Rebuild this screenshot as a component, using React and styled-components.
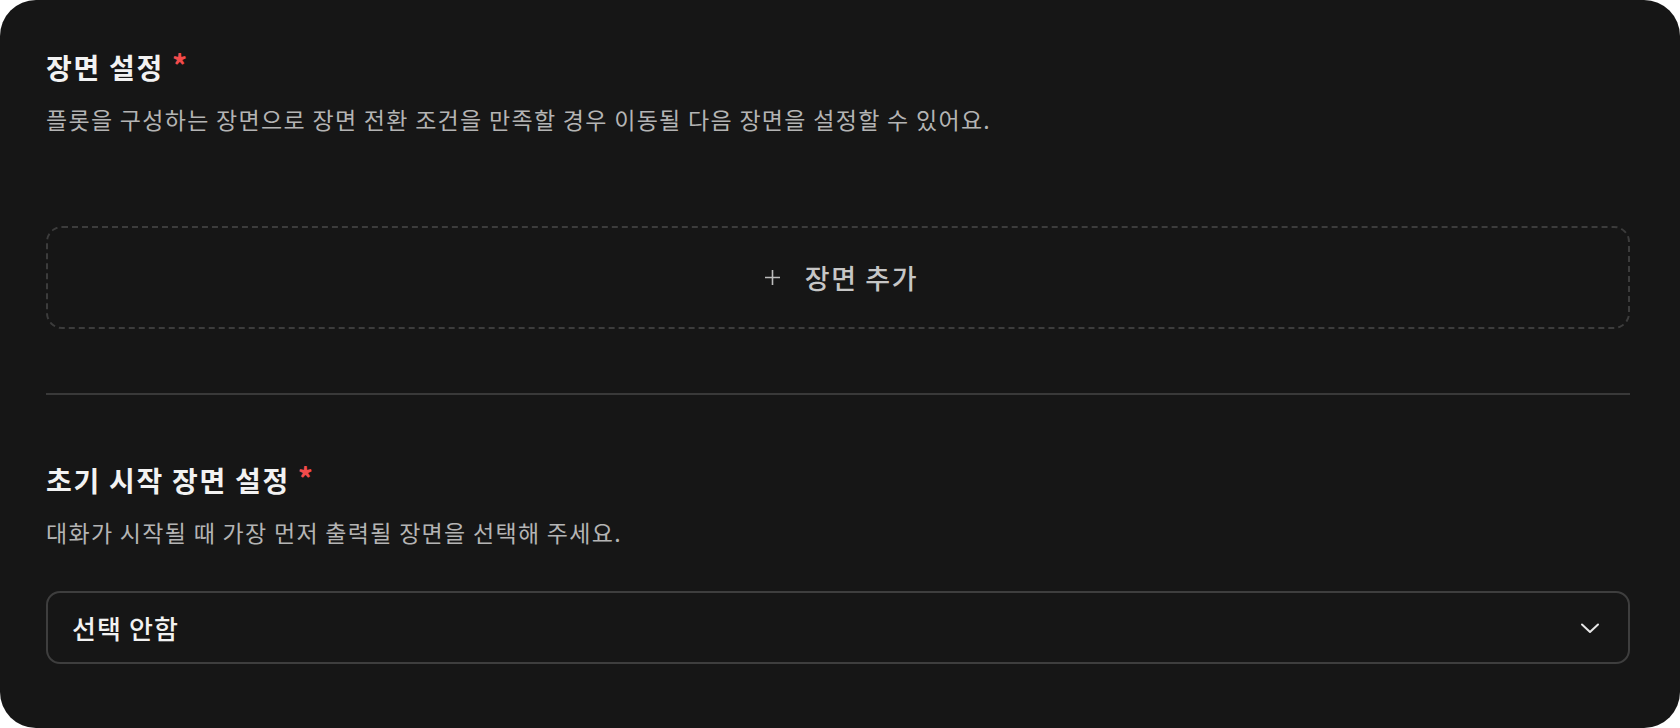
import React from "react";
import styled, { createGlobalStyle } from "styled-components";

const GlobalStyle = createGlobalStyle`
  html, body {
    margin: 0;
    padding: 0;
    background: #ffffff;
  }
  * {
    box-sizing: border-box;
  }
`;

const Panel = styled.div`
  width: 1680px;
  height: 728px;
  background-color: #161616;
  border-radius: 36px;
  padding: 49px 50px 0 46px;
  font-family: "Noto Sans CJK KR", "Noto Sans", sans-serif;
  display: flex;
  flex-direction: column;
`;

const Section = styled.section`
  display: flex;
  flex-direction: column;
`;

const Title = styled.h2`
  margin: 0;
  font-size: 28px;
  line-height: 36px;
  font-weight: 700;
  letter-spacing: 1.7px;
  color: #f2f2f2;
  display: flex;
  align-items: flex-start;
`;

const Required = styled.span`
  margin-left: 8px;
  color: #f24b4b;
  font-size: 30px;
  line-height: 30px;
  font-weight: 700;
  letter-spacing: 0;
`;

const Description = styled.p`
  margin: 19px 0 0;
  font-size: 23px;
  line-height: 30px;
  font-weight: 400;
  letter-spacing: 1.3px;
  color: #b4b4b4;
`;

const AddButton = styled.button`
  margin-top: 92px;
  width: 100%;
  height: 103px;
  border: 2px dashed #3c3c3c;
  border-radius: 16px;
  background: transparent;
  display: flex;
  align-items: center;
  justify-content: center;
  gap: 24px;
  padding: 0 0 0 6px;
  font-family: inherit;
  font-size: 27px;
  font-weight: 500;
  letter-spacing: 1.6px;
  color: #c6c6c6;
  cursor: pointer;
`;

const Divider = styled.hr`
  margin: 64px 0 0;
  border: none;
  height: 2px;
  background-color: #393939;
`;

const SecondSection = styled(Section)`
  margin-top: 67px;
`;

const Select = styled.button`
  margin-top: 44px;
  width: 100%;
  height: 73px;
  border: 2px solid #3e3e3e;
  border-radius: 14px;
  background: transparent;
  display: flex;
  align-items: center;
  justify-content: space-between;
  padding: 0 28px 0 24px;
  font-family: inherit;
  font-size: 26px;
  font-weight: 500;
  letter-spacing: 1.1px;
  color: #f2f2f2;
  cursor: pointer;
`;

const PlusIcon = () => (
  <svg width="17" height="17" viewBox="0 0 17 17" fill="none">
    <path d="M8.5 1v15M1 8.5h15" stroke="#bdbdbd" strokeWidth="1.6" />
  </svg>
);

const ChevronIcon = () => (
  <svg width="20" height="12" viewBox="0 0 20 12" fill="none">
    <path
      d="M2 2.5l8 7.5 8-7.5"
      stroke="#e6e6e6"
      strokeWidth="2"
      strokeLinecap="round"
      strokeLinejoin="round"
    />
  </svg>
);

const App = () => {
  return (
    <>
      <GlobalStyle />
      <Panel>
        <Section>
          <Title>
            장면 설정<Required>*</Required>
          </Title>
          <Description>
            플롯을 구성하는 장면으로 장면 전환 조건을 만족할 경우 이동될 다음
            장면을 설정할 수 있어요.
          </Description>
          <AddButton type="button">
            <PlusIcon />
            장면 추가
          </AddButton>
        </Section>
        <Divider />
        <SecondSection>
          <Title>
            초기 시작 장면 설정<Required>*</Required>
          </Title>
          <Description>
            대화가 시작될 때 가장 먼저 출력될 장면을 선택해 주세요.
          </Description>
          <Select type="button">
            선택 안함
            <ChevronIcon />
          </Select>
        </SecondSection>
      </Panel>
    </>
  );
};

export default App;
